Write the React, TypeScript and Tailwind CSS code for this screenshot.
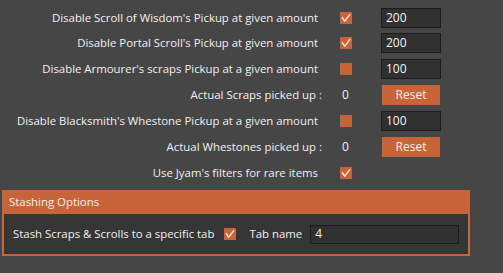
import React from "react";

// Row definition for the pickup settings list
type Row = {
  label: string;
  kind: "checkInput" | "counter" | "check";
  checked?: boolean;
  value?: string;
  top: string;
};

const rows: Row[] = [
  { label: "Disable Scroll of Wisdom's Pickup at given amount", kind: "checkInput", checked: true, value: "200", top: "mt-0" },
  { label: "Disable Portal Scroll's Pickup at given amount", kind: "checkInput", checked: true, value: "200", top: "mt-[5px]" },
  { label: "Disable Armourer's scraps Pickup at a given amount", kind: "checkInput", checked: false, value: "100", top: "mt-[6px]" },
  { label: "Actual Scraps picked up :", kind: "counter", value: "0", top: "mt-[6px]" },
  { label: "Disable Blacksmith's Whestone Pickup at a given amount", kind: "checkInput", checked: false, value: "100", top: "mt-[6px]" },
  { label: "Actual Whestones picked up :", kind: "counter", value: "0", top: "mt-[6px]" },
  { label: "Use Jyam's filters for rare items", kind: "check", checked: true, top: "mt-[6px]" },
];

function CheckBox({ checked }: { checked?: boolean }) {
  return (
    <div className="flex h-[12px] w-[12px] items-center justify-center bg-[#c8643a]">
      {checked && (
        <svg width="12" height="12" viewBox="0 0 12 12" fill="none">
          <path
            d="M2.3 5.6 L4.6 9.2 L9.8 2.6"
            stroke="#f6e6da"
            strokeWidth="1.4"
            strokeLinecap="round"
            strokeLinejoin="round"
          />
        </svg>
      )}
    </div>
  );
}

function TextBox({ value, className }: { value: string; className: string }) {
  return (
    <div
      className={`flex items-center border border-[#1c1c1c] bg-[#303030] pl-[4px] text-[12px] text-[#f4f4f4] ${className}`}
    >
      {value}
    </div>
  );
}

export default function App() {
  return (
    <div className="h-[273px] w-[503px] overflow-hidden bg-[#464646] pt-[8px] font-['Open_Sans',sans-serif] text-[11.4px] leading-none text-[#f0f0f0]">
      {/* Pickup options */}
      <div className="flex flex-col">
        {rows.map((row) => (
          <div
            key={row.label}
            className={`grid h-[20px] grid-cols-[322px_59px_60px] items-center ${row.top}`}
          >
            <div
              className={`whitespace-nowrap text-right ${row.kind === "counter" ? "pr-0" : "pr-[4px]"}`}
            >
              {row.label}
            </div>
            <div className={row.kind === "counter" ? "pl-[20px] text-[12px]" : "pl-[18px]"}>
              {row.kind === "counter" ? row.value : <CheckBox checked={row.checked} />}
            </div>
            <div>
              {row.kind === "checkInput" && (
                <TextBox value={row.value ?? ""} className="h-[20px] w-[60px]" />
              )}
              {row.kind === "counter" && (
                <button className="ml-[1px] flex h-[20px] w-[58px] items-center justify-center bg-[#c8643a] text-[12px] text-[#fbefe6]">
                  Reset
                </button>
              )}
            </div>
          </div>
        ))}
      </div>

      {/* Stashing Options group */}
      <div className="ml-[2px] mt-[7px] w-[468px]">
        <div className="flex h-[24px] items-center bg-[#c8643a] pl-[7px] text-[#fbefe6]">
          Stashing Options
        </div>
        <div className="flex h-[42px] items-center border-x-2 border-b-2 border-[#c8643a] bg-[#363636] pl-[9px]">
          <span className="whitespace-nowrap">Stash Scraps &amp; Scrolls to a specific tab</span>
          <div className="ml-[10px]">
            <CheckBox checked />
          </div>
          <span className="ml-[13px] whitespace-nowrap">Tab name</span>
          <TextBox value="4" className="ml-[8px] h-[19px] w-[149px]" />
        </div>
      </div>
    </div>
  );
}
